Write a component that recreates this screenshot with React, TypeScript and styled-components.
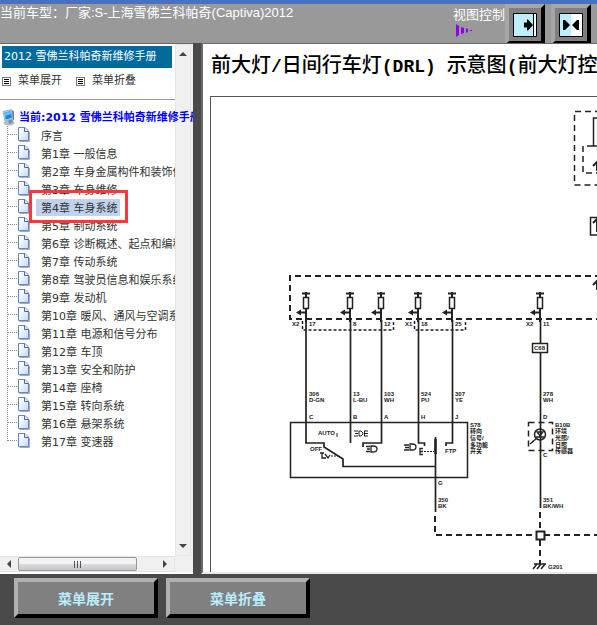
import React from "react";
import styled, { createGlobalStyle } from "styled-components";

const cjk = '"Noto Sans CJK SC", sans-serif';

const GlobalStyle = createGlobalStyle`
  * { box-sizing: border-box; }
  body { margin: 0; background: #4a4a4a; }
  button { font: inherit; cursor: pointer; }
`;

const Page = styled.div`
  display: grid;
  grid-template-rows: 43px minmax(0, 1fr) 51px;
  height: 100vh;
  overflow: hidden;
  background: #4a4a4a;
  font: 11px/18px "DejaVu Sans", ${cjk};
  color: #333;
`;

const Header = styled.header`
  display: flex;
  justify-content: space-between;
  height: 43px;
  overflow: hidden;
  border-top: 4px solid #4a70c4;
  background: #999;
  color: #fff;
  font: 400 13px/18px "Liberation Sans", ${cjk};
  white-space: nowrap;
`;

const Vehicle = styled.h1`
  margin: 0;
  font: inherit;
`;

const ViewControls = styled.div`
  display: flex;
  gap: 6px;
  padding-right: 6px;
`;

const ViewLabel = styled.div`
  display: flex;
  flex-direction: column;
  width: 46px;
  padding-top: 2px;
  svg { margin: 0 0 0 3px; }
`;

const Bevel = styled.button`
  display: flex;
  align-items: center;
  justify-content: center;
  padding: 0;
  border: 4px solid;
  border-color: #b0b0b0 #000 #000 #b0b0b0;
  background: #808080;
`;

const ViewButton = styled(Bevel)`
  flex: none;
  width: 40px;
  height: 41px;
  border-color: #a6a6a6 #000 #000 #a6a6a6;
`;

const FooterButton = styled(Bevel)`
  width: 144px;
  height: 40px;
  color: #b8ecff;
  font: 700 14px/20px ${cjk};
`;

const Workspace = styled.div`
  display: grid;
  grid-template-columns: 193px minmax(0, 1fr);
  column-gap: 8px;
  min-height: 0;
`;

const Sidebar = styled.aside`
  display: grid;
  grid-template-columns: 175px 16px;
  grid-template-rows: minmax(0, 1fr) 16px;
  overflow: hidden;
  border-top: 1px solid #696969;
  border-bottom: 2px solid #fff;
  background: #f0f0f0;
`;

const Contents = styled.nav`
  min-width: 0;
  padding-top: 2px;
  background: #fff;
  white-space: nowrap;
`;

const ManualTitle = styled.h2`
  height: 22px;
  margin: 0 3px 0 2px;
  padding-left: 2px;
  background: #006a9d;
  color: #fff;
  font: inherit;
  line-height: 22px;
`;

const MenuActions = styled.div`
  display: flex;
  gap: 14px;
  height: 32px;
  padding: 4px 0 0 2px;
  border-bottom: 1px solid #999;
`;

const MenuAction = styled.button`
  display: flex;
  align-items: center;
  gap: 7px;
  height: 18px;
  padding: 0;
  border: 0;
  background: none;
  color: #333;
`;

const TreeRoot = styled.a`
  display: flex;
  align-items: center;
  gap: 3px;
  height: 17px;
  margin-top: 9px;
  padding-left: 2px;
  position: relative;
  color: #00f;
  font-weight: 700;
  text-decoration: none;
  svg { flex: none; }
`;

const Tree = styled.ul`
  margin: 0;
  padding: 0 0 0 7px;
  list-style: none;
  overflow: hidden;
`;

const TreeItem = styled.li`
  display: flex;
  align-items: center;
  height: 18px;
  position: relative;
  svg { flex: none; }
`;

const Chapter = styled.a<{ $selected: boolean }>`
  margin-left: 5px;
  padding: 2px 2px 0 5px;
  background: ${(p) => (p.$selected ? "#c1d2ee" : "transparent")};
  color: #333;
  line-height: 15px;
  text-decoration: none;
`;

const Marker = styled.span`
  position: absolute;
  inset: -8px auto auto 22px;
  z-index: 1;
  width: 99px;
  height: 33px;
  border: 3px solid #fb373b;
  pointer-events: none;
`;

const VerticalBar = styled.div`
  display: flex;
  flex-direction: column;
  justify-content: space-between;
  border: 1px solid #e6e6e6;
  background: #f0f0f0;
`;

const HorizontalBar = styled.div`
  display: grid;
  grid-template-columns: 18px 119px minmax(0, 1fr);
  border: solid #e6e6e6;
  border-width: 1px 1px 1px 0;
`;

const ScrollArrow = styled.button`
  display: flex;
  align-items: center;
  justify-content: center;
  min-height: 14px;
  padding: 0;
  border: 0;
  background: none;
  &:last-child { justify-content: flex-end; padding-right: 5px; }
  ${VerticalBar} & { height: 18px; justify-content: center; padding: 0; }
`;

const Thumb = styled.div`
  display: flex;
  align-items: center;
  justify-content: center;
  border: 1px solid #999;
  border-radius: 2px;
  background: linear-gradient(#f3f3f3 0 48%, #dcdcdf 52%, #c4c4c9);
`;

const Document = styled.main`
  min-width: 0;
  overflow: hidden;
  display: grid;
  grid-template-rows: 51px minmax(0, 1fr);
  padding-left: 6px;
  border: solid #696969;
  border-width: 1px 0 0 2px;
  border-bottom: 2px solid #e8e8e8;
  background: #fff;
`;

const DocumentTitle = styled.h2`
  margin: 0;
  padding: 6px 0 0 2px;
  color: #000;
  font: 500 20px/28px ${cjk};
  white-space: pre;
`;

const Latin = styled.span`
  font: 700 18px/28px "Liberation Mono", monospace;
`;

const Diagram = styled.figure`
  margin: 1px 0 0 1px;
  overflow: hidden;
  border: solid #555;
  border-width: 1px 0 0 1px;
  svg { display: block; }
`;

const Footer = styled.footer`
  display: flex;
  align-items: flex-start;
  gap: 8px;
  padding: 4px 14px;
`;

const chapters = [
  "序言",
  "第1章 一般信息",
  "第2章 车身金属构件和装饰件",
  "第3章 车身维修",
  "第4章 车身系统",
  "第5章 制动系统",
  "第6章 诊断概述、起点和编程",
  "第7章 传动系统",
  "第8章 驾驶员信息和娱乐系统",
  "第9章 发动机",
  "第10章 暖风、通风与空调系统",
  "第11章 电源和信号分布",
  "第12章 车顶",
  "第13章 安全和防护",
  "第14章 座椅",
  "第15章 转向系统",
  "第16章 悬架系统",
  "第17章 变速器",
];

const ListIcon = () => (
  <svg width="9" height="9" viewBox="0 0 9 9" fill="none" shapeRendering="crispEdges">
    <path d="M.5.5h8v8h-8z" stroke="#777" />
    <path d="M2 2.5h5M2 4.5h5M2 6.5h5" stroke="#000" />
  </svg>
);

const ComputerIcon = () => (
  <svg width="14" height="17" viewBox="0 0 14 17">
    <ellipse cx="7" cy="14" rx="5.5" ry="2.6" fill="#b8bac8" />
    <path d="M6 10l4-1 1 4-4 2z" fill="#8187a5" />
    <path d="M1 2.5L9.5.7l1.5 9L3 12z" fill="#b7cff2" stroke="#8faedb" />
    <path d="M2.6 3.5l6.3-1.3 1 6.6-6.1 1.7z" fill="#1686e0" />
    <path d="M2.6 3.5l6.3-1.3.4 2.7-6.2 2.3z" fill="#5dbdf8" />
    <path d="M10 1l2 1.5v8L11 12z" fill="#6c79b4" />
  </svg>
);

const Branch = ({ last }: { last: boolean }) => (
  <svg width="24" height="18" viewBox="0 0 24 18" fill="none">
    <defs>
      <linearGradient id="paper" x2="1" y2="1">
        <stop offset=".2" stopColor="#fff" />
        <stop offset="1" stopColor="#bcd8fb" />
      </linearGradient>
    </defs>
    <path d={last ? "M.5 0v9" : "M.5 0v18"} stroke="#888" strokeDasharray="1 1" />
    <path d="M1 8.5h10" stroke="#888" strokeDasharray="1 1" />
    <path d="M12.5 15.5h10V6" stroke="#aab" />
    <path d="M11.5 1.5h6.5l3.5 3.5v9.5h-10z" fill="url(#paper)" stroke="#6785c2" />
    <path d="M17.5 1.5v4h4" fill="#dce9fc" stroke="#4869b0" />
  </svg>
);

const ViewIcon = ({ split = false }: { split?: boolean }) => (
  <svg width="24" height="24" viewBox="0 0 24 24">
    <path d="M.5.5h23v23H.5z" fill="#fff" stroke="#000" />
    <path d={split ? "M1 1h11v22H1z" : "M1 1h19v22H1z"} fill="#bdeeff" />
    {split ? (
      <path d="M4 7h2l5 5-5 5H4zM20 7h-2l-5 5 5 5h2z" />
    ) : (
      <>
        <path d="M20 1h1v22h-1z" />
        <path d="M11 9.500h3V6.500h1l5 5.500-5 5.500h-1v-3h-3z" />
      </>
    )}
  </svg>
);

const Arrow = ({ d }: { d: string }) => (
  <svg width="8" height="8" viewBox="0 0 8 8" fill="#444">
    <path d={d} />
  </svg>
);

const fuses = [306, 350, 381, 418, 452, 540];

const labels: [number, number, string][] = [
  [292, 326, "X2"], [309, 326, "17"], [353, 326, "8"], [384, 326, "12"],
  [405, 326, "X1"], [421, 326, "18"], [455, 326, "25"], [526, 326, "X2"], [543, 326, "11"],
  [309, 396, "306"], [309, 402, "D-GN"], [353, 396, "13"], [353, 402, "L-BU"],
  [384, 396, "103"], [384, 402, "WH"], [421, 396, "524"], [421, 402, "PU"],
  [455, 396, "307"], [455, 402, "YE"], [543, 396, "278"], [543, 402, "WH"],
  [309, 419, "C"], [353, 419, "B"], [384, 419, "A"], [421, 419, "H"], [455, 419, "J"],
  [543, 419, "D"], [543, 457, "C"], [438, 485, "G"], [438, 502, "350"], [438, 508, "BK"],
  [543, 502, "351"], [543, 508, "BK/WH"], [534, 350, "C68"], [548, 569, "G201"],
  [318, 435, "AUTO"], [310, 451, "OFF"], [445, 453, "FTP"],
  [470, 427, "S78"], [470, 433, "转向"], [470, 440, "信号/"], [470, 447, "多功能"], [470, 453, "开关"],
  [555, 427, "B10B"], [555, 433, "环境"], [555, 440, "光照/"], [555, 447, "日照"], [555, 453, "传感器"],
];

const Schematic = () => (
  <svg width="700" height="476" viewBox="211 97 700 476" fill="none" stroke="#222" strokeWidth="1.5">
    <g strokeDasharray="6 4">
      <path d="M911 276H290v43h621" strokeWidth="2" />
      <path d="M911 111.5H574.5V185H911" />
      <path d="M435 516v19h101M544 535h367" strokeWidth="2" />
      <path d="M540 512v19M540 540v24" strokeWidth="2" />
      <path d="M528.5 422.5h24v28h-24z" />
      <path d="M593 146h-10v27h30" />
    </g>
    <path d="M302.5 321v9h91v-9M414.5 321v9h51v-9" strokeDasharray="3 2" />
    <path d="M620 118h-26.5v28H620M620 217.5h-29.5v17.5H620" />
    <path d="M593 223l4-4 4 4M597 219v13M593 285l4-4 4 4M597 281v9M593 166l4-4 4 4M597 162v9" strokeWidth="2" />
    {fuses.map((x) => (
      <g key={x}>
        <path d={`M${x - 4} 293.5h8M${x} 292v5M${x} 309v13M${x} 312.5h-7`} strokeWidth="2" />
        <path d={`M${x - 2.5} 297.5h5v11h-5z`} />
        <path d={`M${x - 10} 312.5l5-3v6z`} fill="#222" stroke="none" />
      </g>
    ))}
    <path d="M306 320v123h18v4l19 12v7.5h92" strokeWidth="1.7" />
    <path d="M350.5 320v123M381.5 320v123H363v4M418.5 320v123h6v3M452.5 320v123H446v3M435.5 437v75M540.5 320v23M540.5 353v155" strokeWidth="1.7" />
    <path d="M435.5 439v15" strokeWidth="2.5" />
    <path d="M290.5 422.5h177v55h-177z" />
    <path d="M532.5 343.5h15v9h-15z" />
    <path d="M536.5 531.5h8v8h-8z" fill="#fff" strokeWidth="2" />
    <g strokeWidth="1">
      <path d="M337 433v4M354 431h4M355 433.5h3M354 436h4M359 431v5h2l2-2v-1l-2-2zM368 431h-4M368 433.5h-3M368 436h-4M364.5 431v5" />
      <path d="M366 446.5h4M367 449h3M366 451.5h4M371 446h2q4 0 4 3t-4 3h-2z" strokeWidth="1.3" />
      <path d="M404 445h5M405 447.5h4M404 450h5M410 444h2q4 0 4 3t-4 3h-2z" strokeWidth="1.3" />
      <path d="M423 448.5h-3v6h3M420 451.5h3M320 453h4M322 453v5h4M325 454l3 4 2-3" strokeWidth="1.3" />
      <path d="M424 451.5h10M331 456h7" strokeDasharray="2 1" />
      <circle cx="540" cy="434.5" r="5.5" strokeWidth="1.5" />
      <path d="M536 437h8M537 432h6l-3 4zM536 439l-4 3M534 441l-4 3" strokeWidth="1.3" />
      <path d="M534 564h12M537 564l-4 5M541 564l-4 5M545 564l-4 5" strokeWidth="1.5" />
    </g>
    <g fill="#222" stroke="none" fontFamily='"Liberation Sans", "Noto Sans CJK SC", sans-serif' fontSize="6" fontWeight="700">
      {labels.map(([x, y, text]) => (
        <text key={`${x}-${y}`} x={x} y={y}>{text}</text>
      ))}
    </g>
  </svg>
);

export default function App() {
  return (
    <Page>
      <GlobalStyle />
      <Header>
        <Vehicle>当前车型：厂家:S-上海雪佛兰科帕奇(Captiva)2012</Vehicle>
        <ViewControls>
          <ViewLabel>
            视图控制
            <svg width="18" height="13" viewBox="0 0 18 13" fill="#8b00e8">
              <path d="M0 0l3 2v9l-3 2zM5 3l3 1v5l-3 1zM10 4l2 1v3l-2 1zM14 6h2v1h-2z" />
            </svg>
          </ViewLabel>
          <ViewButton aria-label="向右展开"><ViewIcon /></ViewButton>
          <ViewButton aria-label="左右分栏"><ViewIcon split /></ViewButton>
        </ViewControls>
      </Header>
      <Workspace>
        <Sidebar>
          <Contents>
            <ManualTitle>2012 雪佛兰科帕奇新维修手册</ManualTitle>
            <MenuActions>
              <MenuAction><ListIcon />菜单展开</MenuAction>
              <MenuAction><ListIcon />菜单折叠</MenuAction>
            </MenuActions>
            <TreeRoot href="#manual"><ComputerIcon />当前:2012 雪佛兰科帕奇新维修手册</TreeRoot>
            <Tree>
              {chapters.map((name, i) => (
                <TreeItem key={name}>
                  <Branch last={i === chapters.length - 1} />
                  <Chapter href={`#chapter-${i}`} $selected={i === 4}>{name}</Chapter>
                  {i === 4 && <Marker />}
                </TreeItem>
              ))}
            </Tree>
          </Contents>
          <VerticalBar>
            <ScrollArrow aria-label="向上滚动"><Arrow d="M0 6l4-4 4 4z" /></ScrollArrow>
            <ScrollArrow aria-label="向下滚动"><Arrow d="M0 2l4 4 4-4z" /></ScrollArrow>
          </VerticalBar>
          <HorizontalBar>
            <ScrollArrow aria-label="向左滚动"><Arrow d="M6 0L2 4l4 4z" /></ScrollArrow>
            <Thumb>
              <svg width="9" height="7" viewBox="0 0 9 7" stroke="#555">
                <path d="M1.5 0v7M4.5 0v7M7.5 0v7" />
              </svg>
            </Thumb>
            <ScrollArrow aria-label="向右滚动"><Arrow d="M2 0l4 4-4 4z" /></ScrollArrow>
          </HorizontalBar>
        </Sidebar>
        <Document>
          <DocumentTitle>
            前大灯<Latin>/</Latin>日间行车灯<Latin>(DRL) </Latin>示意图<Latin>(</Latin>前大灯控制
          </DocumentTitle>
          <Diagram><Schematic /></Diagram>
        </Document>
      </Workspace>
      <Footer>
        <FooterButton>菜单展开</FooterButton>
        <FooterButton>菜单折叠</FooterButton>
      </Footer>
    </Page>
  );
}
